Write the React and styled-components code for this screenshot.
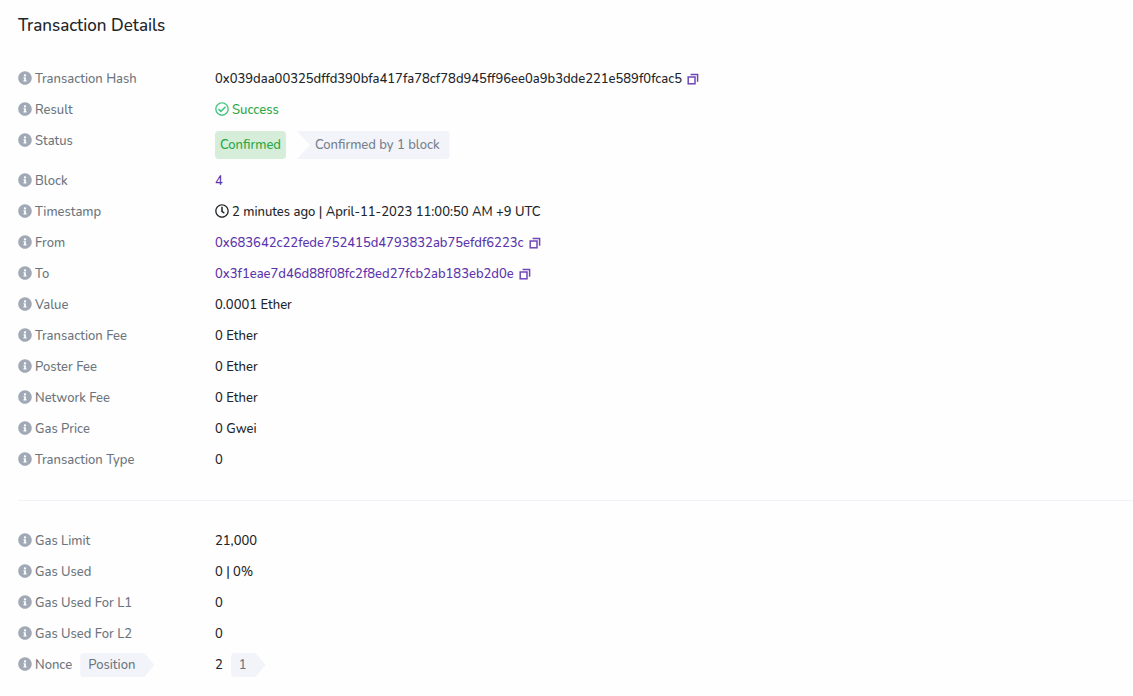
import React from 'react'
import styled, { createGlobalStyle } from 'styled-components'
import { FaInfoCircle, FaRegCheckCircle, FaRegClock } from 'react-icons/fa'

const GlobalStyle = createGlobalStyle`
  * {
    box-sizing: border-box;
  }

  body {
    margin: 0;
    background-color: #fefefe;
    color: #212529;
    font-family: Nunito, Lato, "Open Sans", sans-serif;
    font-size: 13px;
    font-weight: 500;
    line-height: 24px;
  }
`

const Page = styled.main`
  padding: 13px 0 16px 18px;
`

const Title = styled.h1`
  margin: 0 0 28px;
  font-size: 17px;
  font-weight: 500;
  line-height: 26px;
`

const Section = styled.dl`
  display: grid;
  gap: 7px;
  margin: 0;
`

const Row = styled.div`
  display: grid;
  grid-template-columns: 197px minmax(0, 1fr);
`

const Label = styled.dt`
  display: flex;
  align-items: center;
  gap: 3px;
  height: 24px;
  color: #6c757d;
`

const InfoIcon = styled(FaInfoCircle)`
  width: 14px;
  height: 14px;
  margin-bottom: 2px;
  flex-shrink: 0;
  color: #a1a8b6;
`

const Value = styled.dd`
  display: flex;
  align-items: center;
  flex-wrap: wrap;
  min-height: 24px;
  margin: 0;
  overflow-wrap: anywhere;
`

const IconText = styled.span`
  display: flex;
  align-items: center;
  gap: 3px;
  color: ${(props) => props.$color || 'inherit'};

  svg {
    width: 14px;
    height: 14px;
    margin-bottom: 2px;
    color: ${(props) => props.$iconColor || 'inherit'};
  }
`

const HashLink = styled.a`
  color: #5b34ab;
  text-decoration: none;

  &:hover {
    text-decoration: underline;
  }
`

const CopyButton = styled.button`
  display: flex;
  margin-left: 5px;
  padding: 0;
  border: 0;
  background: transparent;
  color: #6f48b8;
  cursor: pointer;
`

const StatusBadges = styled.span`
  display: flex;
  gap: 11px;
  margin: 2px 0 3px;
  line-height: 28px;
`

const Confirmed = styled.span`
  padding: 0 5px;
  border-radius: 4px;
  background-color: #d6edda;
  color: #28a745;
`

const Confirmations = styled.span`
  padding: 0 10px 0 18px;
  border-radius: 0 4px 4px 0;
  background-color: #f3f4f9;
  color: #76808c;
  clip-path: polygon(0 0, 100% 0, 100% 100%, 0 100%, 13px 50%);
`

const Tag = styled.span`
  margin-left: ${(props) => props.$gap || '5px'};
  padding: 0 19px 0 8px;
  border-radius: 4px;
  background-color: #f3f4f9;
  color: #6c757d;
  clip-path: polygon(0 0, calc(100% - 10px) 0, 100% 50%, calc(100% - 10px) 100%, 0 100%);
`

const Divider = styled.hr`
  margin: 28px 0;
  border: 0;
  border-top: 1px solid #f1f1f8;
`

function CopyIcon() {
  return (
    <svg width="12" height="12" viewBox="0 0 12 12" fill="none" stroke="currentColor" strokeWidth="1.5" aria-hidden="true">
      <rect x="1.2" y="4" width="6.8" height="6.8" />
      <path d="M3.6 1.4h7v7.4" />
    </svg>
  )
}

function Copy({ what, text }) {
  return (
    <CopyButton type="button" aria-label={`Copy ${what}`} onClick={() => navigator.clipboard?.writeText(text)}>
      <CopyIcon />
    </CopyButton>
  )
}

function Detail({ label, tag, children }) {
  return (
    <Row>
      <Label>
        <InfoIcon aria-hidden="true" />
        <span>{label}</span>
        {tag && <Tag>{tag}</Tag>}
      </Label>
      <Value>{children}</Value>
    </Row>
  )
}

const tx = {
  hash: '0x039daa00325dffd390bfa417fa78cf78d945ff96ee0a9b3dde221e589f0fcac5',
  from: '0x683642c22fede752415d4793832ab75efdf6223c',
  to: '0x3f1eae7d46d88f08fc2f8ed27fcb2ab183eb2d0e',
}

export default function App() {
  return (
    <Page>
      <GlobalStyle />
      <Title>Transaction Details</Title>
      <Section>
        <Detail label="Transaction Hash">
          <span>{tx.hash}</span>
          <Copy what="transaction hash" text={tx.hash} />
        </Detail>
        <Detail label="Result">
          <IconText $color="#28a745" $iconColor="#3cc47c">
            <FaRegCheckCircle aria-hidden="true" />
            Success
          </IconText>
        </Detail>
        <Detail label="Status">
          <StatusBadges>
            <Confirmed>Confirmed</Confirmed>
            <Confirmations>Confirmed by 1 block</Confirmations>
          </StatusBadges>
        </Detail>
        <Detail label="Block">
          <HashLink href="#block">4</HashLink>
        </Detail>
        <Detail label="Timestamp">
          <IconText>
            <FaRegClock aria-hidden="true" />
            2 minutes ago | April-11-2023 11:00:50 AM +9 UTC
          </IconText>
        </Detail>
        <Detail label="From">
          <HashLink href="#from">{tx.from}</HashLink>
          <Copy what="sender address" text={tx.from} />
        </Detail>
        <Detail label="To">
          <HashLink href="#to">{tx.to}</HashLink>
          <Copy what="recipient address" text={tx.to} />
        </Detail>
        <Detail label="Value">0.0001 Ether</Detail>
        <Detail label="Transaction Fee">0 Ether</Detail>
        <Detail label="Poster Fee">0 Ether</Detail>
        <Detail label="Network Fee">0 Ether</Detail>
        <Detail label="Gas Price">0 Gwei</Detail>
        <Detail label="Transaction Type">0</Detail>
      </Section>
      <Divider />
      <Section>
        <Detail label="Gas Limit">21,000</Detail>
        <Detail label="Gas Used">0 | 0%</Detail>
        <Detail label="Gas Used For L1">0</Detail>
        <Detail label="Gas Used For L2">0</Detail>
        <Detail label="Nonce" tag="Position">
          <span>2</span>
          <Tag $gap="8px">1</Tag>
        </Detail>
      </Section>
    </Page>
  )
}
